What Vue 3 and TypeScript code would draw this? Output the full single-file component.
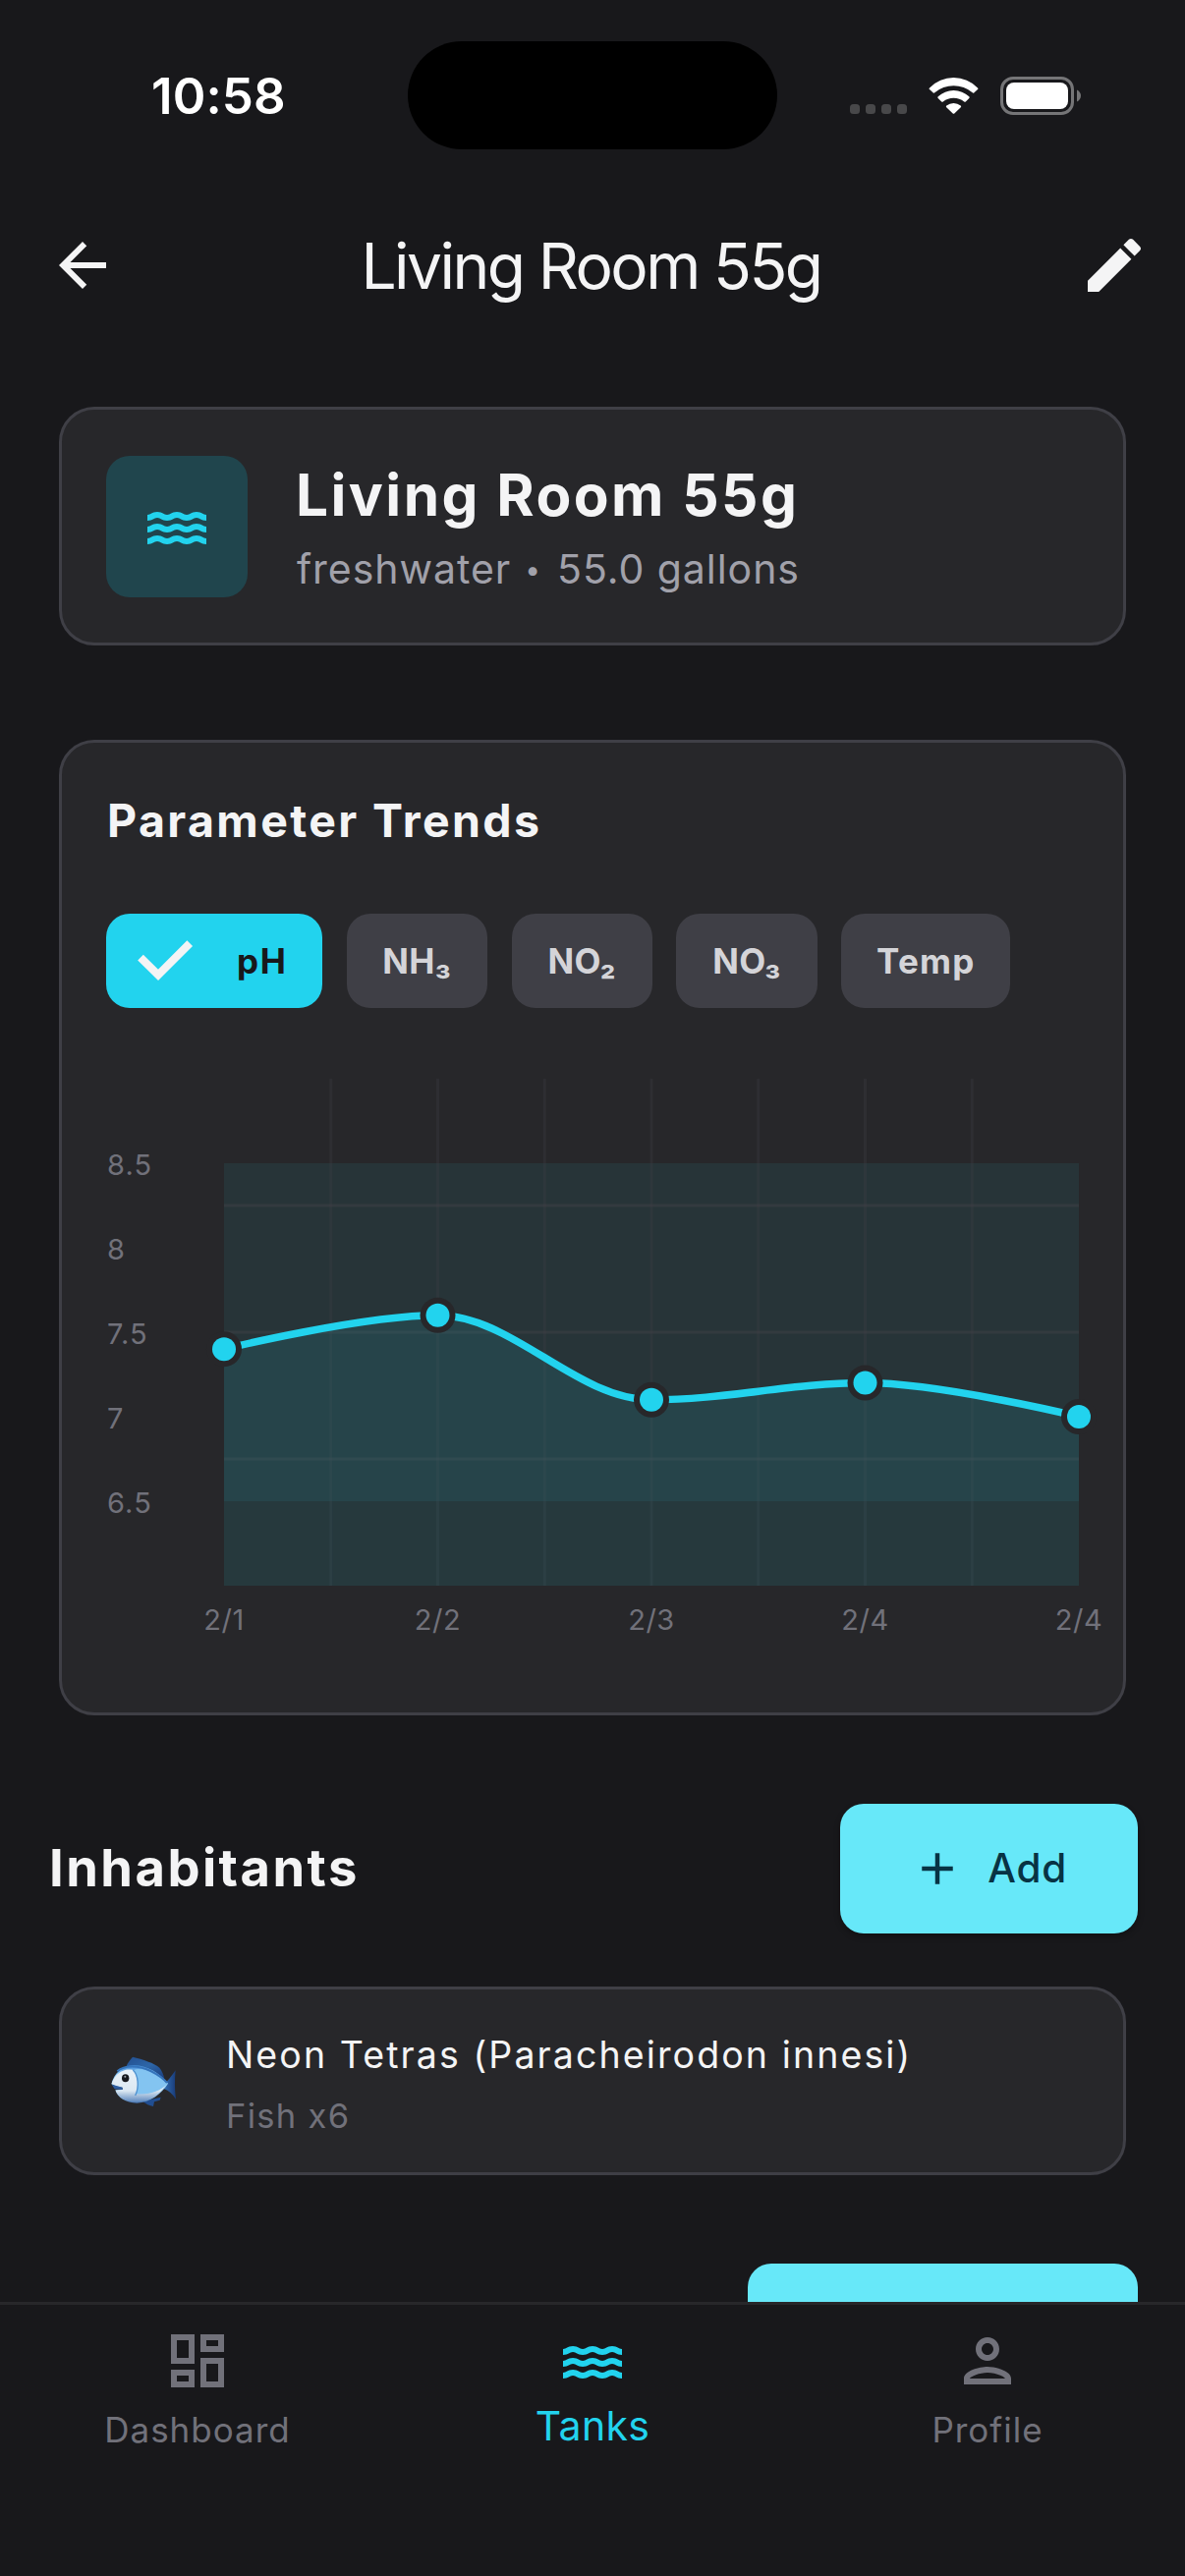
<script setup lang="ts">
interface Reading {
  date: string
  value: number
}

interface Chip {
  label: string
  kind: string
}

const chips: Chip[] = [
  { label: 'pH', kind: 'selected' },
  { label: 'NH₃', kind: 'formula' },
  { label: 'NO₂', kind: 'formula' },
  { label: 'NO₃', kind: 'formula' },
  { label: 'Temp', kind: 'word' },
]

const readings: Reading[] = [
  { date: '2/1', value: 7.4 },
  { date: '2/2', value: 7.6 },
  { date: '2/3', value: 7.1 },
  { date: '2/4', value: 7.2 },
  { date: '2/4', value: 7.0 },
]

// Plot geometry, in the chart's own coordinates
const plot = { left: 120, right: 990, top: 18, bottom: 534 }
const min = 6
const max = 9
const step = (plot.right - plot.left) / (readings.length - 1)
const yOf = (v: number) => plot.bottom - ((v - min) / (max - min)) * (plot.bottom - plot.top)

const points = readings.map((r, i) => ({ x: plot.left + i * step, y: yOf(r.value), date: r.date }))
const tension = step * 0.35

// Smoothed line with flat tangents at the inner points
const linePath = points
  .map((p, i) => {
    if (i === 0) return `M${p.x} ${p.y}`
    const prev = points[i - 1]
    const out = i === 1 ? 0 : tension
    const into = i === points.length - 1 ? 0 : tension
    return `C${prev.x + out} ${prev.y} ${p.x - into} ${p.y} ${p.x} ${p.y}`
  })
  .join(' ')
const areaPath = `${linePath} L${plot.right} ${plot.bottom} L${plot.left} ${plot.bottom} Z`

const verticals = [1, 2, 3, 4, 5, 6, 7].map((k) => plot.left + (k * step) / 2)
const horizontals = [8.25, 7.5, 6.75].map(yOf)
const ticks = [8.5, 8, 7.5, 7, 6.5]

const waveRow =
  'M5.35 9c1.19 0 1.42 1 3.33 1 1.95 0 2.09-1 3.33-1 1.19 0 1.42 1 3.33 1 1.95 0 2.09-1 3.33-1 1.19 0 1.4.98 3.33 1V8c-1.19 0-1.42-1-3.33-1-1.95 0-2.09 1-3.33 1-1.19 0-1.42-1-3.33-1-1.95 0-2.09 1-3.33 1-1.19 0-1.42-1-3.33-1C3.38 7 3.24 8 2 8v2c1.9 0 2.17-1 3.35-1z'
</script>

<template>
  <div class="screen">
    <header class="status">
      <div class="time">10:58</div>
      <div class="island"></div>
      <div class="dots"><i></i><i></i><i></i><i></i></div>
      <svg class="wifi" width="51" height="39" viewBox="0 0 51 39" fill="#fff">
        <path d="M1 11.4A34.2 34.2 0 0 1 50 11.4Q50.9 12.2 50 13L46.2 16.4Q45.5 17 44.7 16.3A29.5 29.5 0 0 0 6.3 16.3Q5.5 17 4.8 16.4L1 13Q.1 12.2 1 11.4Z" />
        <path d="M9.7 20.3A23 23 0 0 1 41.3 20.3Q42.2 21.2 41.3 22L37.8 25.4Q37 26 36.2 25.4A17.4 17.4 0 0 0 14.8 25.4Q14 26 13.2 25.4L9.7 22Q8.8 21.2 9.7 20.3Z" />
        <path d="M18.3 29.6A11.6 11.6 0 0 1 32.7 29.6Q33.7 30.4 32.8 31.2L26.3 37.5Q25.5 38.2 24.7 37.5L18.2 31.2Q17.3 30.4 18.3 29.6Z" />
      </svg>
      <svg class="battery" width="83" height="39" viewBox="0 0 83 39">
        <rect x="1.5" y="1.5" width="72" height="36" rx="11.5" fill="none" stroke="#757577" stroke-width="3" />
        <rect x="6" y="6" width="63" height="27" rx="8" fill="#fff" />
        <path d="M78 13.5c2.4 1 4 3.4 4 6s-1.600 5-4 6z" fill="#757577" />
      </svg>
    </header>

    <div class="appbar">
      <svg class="icon" viewBox="0 0 24 24" fill="#f4f4f5"><path d="M20 11H7.830l5.590-5.590L12 4l-8 8 8 8 1.410-1.410L7.830 13H20v-2z" /></svg>
      <h1>Living Room 55g</h1>
      <svg class="icon" viewBox="0 0 24 24" fill="#f4f4f5"><path d="M3 17.250V21h3.750L17.810 9.940l-3.750-3.750L3 17.250zM20.710 7.040c.39-.39.39-1.020 0-1.410l-2.340-2.340c-.39-.39-1.020-.39-1.410 0l-1.830 1.830 3.750 3.750 1.830-1.830z" /></svg>
    </div>

    <main class="content">
      <section class="card tank">
        <div class="badge">
          <svg class="icon" viewBox="0 0 24 24" fill="#22d3ee">
            <path :d="waveRow" /><path :d="waveRow" transform="translate(0 4)" /><path :d="waveRow" transform="translate(0 8)" />
          </svg>
        </div>
        <div>
          <div class="name">Living Room 55g</div>
          <div class="detail">freshwater <span class="bullet">•</span> 55.0 gallons</div>
        </div>
      </section>

      <section class="card trends">
        <h2>Parameter Trends</h2>
        <div class="chips">
          <div v-for="c in chips" :key="c.label" class="chip" :class="c.kind">
            <svg v-if="c.kind === 'selected'" width="72" height="72" viewBox="0 0 72 72">
              <path d="M11 32.600L29 50.400L61.200 18.200" fill="none" stroke="#f4f4f5" stroke-width="8" />
            </svg>
            <span>{{ c.label }}</span>
          </div>
        </div>
        <svg class="chart" width="990" height="620" viewBox="0 0 990 620">
          <rect :x="plot.left" :y="yOf(8.5)" :width="plot.right - plot.left" :height="yOf(6.5) - yOf(8.5)" fill="#22d3ee" fill-opacity="0.075" />
          <path v-for="x in verticals" :key="x" :d="`M${x} ${plot.top}V${plot.bottom}`" stroke="#3f3f46" stroke-opacity="0.3" stroke-width="3" />
          <path v-for="y in horizontals" :key="y" :d="`M${plot.left} ${y}H${plot.right}`" stroke="#3f3f46" stroke-opacity="0.5" stroke-width="3" />
          <path :d="areaPath" fill="#22d3ee" fill-opacity="0.1" />
          <path :d="linePath" fill="none" stroke="#22d3ee" stroke-width="7.5" />
          <template v-for="(p, i) in points" :key="i">
            <circle :cx="p.x" :cy="p.y" r="18" fill="#27272a" />
            <circle :cx="p.x" :cy="p.y" r="12" fill="#22d3ee" />
            <text :x="p.x" y="578.5" text-anchor="middle" class="date">{{ p.date }}</text>
          </template>
          <text v-for="t in ticks" :key="t" x="1" :y="yOf(t) + 12">{{ t }}</text>
        </svg>
      </section>

      <div class="row">
        <h3>Inhabitants</h3>
        <button class="add">
          <svg width="54" height="54" viewBox="0 0 24 24" fill="#083344"><path d="M19 13h-6v6h-2v-6H5v-2h6V5h2v6h6v2z" /></svg>
          <span>Add</span>
        </button>
      </div>

      <section class="card resident">
        <svg width="92" height="84" viewBox="0 0 276 252">
          <defs>
            <linearGradient id="fish-body" x1="0" y1="0" x2="0" y2="1">
              <stop offset="0" stop-color="#3f86cf" /><stop offset=".2" stop-color="#7dbdf2" />
              <stop offset=".55" stop-color="#9bd3f8" /><stop offset=".85" stop-color="#8fb9e0" /><stop offset="1" stop-color="#3d6ba8" />
            </linearGradient>
            <linearGradient id="fish-belly" x1="0" y1="0" x2="0" y2="1">
              <stop offset="0" stop-color="#e8f1f8" /><stop offset=".65" stop-color="#dce8f2" /><stop offset="1" stop-color="#5b86bd" />
            </linearGradient>
            <linearGradient id="fish-tail" x1="0" y1="0" x2="1" y2="0">
              <stop offset="0" stop-color="#3470b4" /><stop offset="1" stop-color="#183a78" />
            </linearGradient>
            <linearGradient id="fish-fin" x1="0" y1="0" x2="1" y2="1">
              <stop offset="0" stop-color="#234f90" /><stop offset=".5" stop-color="#2d66a8" /><stop offset="1" stop-color="#1b3f7f" />
            </linearGradient>
          </defs>
          <path d="M200 136C214 126 224 110 236 94C233 122 233 152 237 182C228 168 216 156 200 150Z" fill="url(#fish-tail)" />
          <path d="M86 80C91 70 98 60 105 53C135 60 172 72 187 86C194 94 198 105 202 118L140 100Z" fill="url(#fish-fin)" />
          <path d="M134 188C146 196 156 202 168 204L171 190L188 185L191 176Z" fill="#214e91" />
          <path d="M40 136C48 104 72 78 110 78C152 80 186 102 213 134C192 166 160 191 118 194C84 194 58 176 52 154L74 152L74 146L56 143Z" fill="url(#fish-body)" />
          <path d="M41 135C48 112 62 98 84 92C96 90 106 92 109 94C120 110 123 140 116 166C150 168 180 158 205 142C184 170 154 189 118 191C86 191 60 175 53 155L75 153L74 146L56 142Z" fill="url(#fish-belly)" />
          <path d="M108 94C120 86 150 92 170 104C188 114 202 124 211 134C188 160 152 168 117 165C124 140 121 112 108 94Z" fill="#83c4f1" />
          <path d="M106 93C122 108 126 144 113 171" fill="none" stroke="#4f92d0" stroke-width="4" />
          <path d="M41 137L58 142L74 146L74 153L50 151" fill="#2e5da0" />
          <path d="M58 97C80 78 122 78 160 96C180 106 198 118 210 132" fill="none" stroke="#3574bb" stroke-width="6" />
          <ellipse cx="83" cy="118" rx="11" ry="12" fill="#15171c" /><circle cx="82" cy="113" r="3" fill="#9aa3ad" />
        </svg>
        <div>
          <div class="species">Neon Tetras (Paracheirodon innesi)</div>
          <div class="count">Fish x6</div>
        </div>
      </section>

      <div class="row next"><div class="next-button"></div></div>
    </main>

    <nav class="tabs">
      <div class="tab">
        <svg class="icon" viewBox="0 0 24 24" fill="#71717a"><path d="M19 5v2h-4V5h4M9 5v6H5V5h4m10 8v6h-4v-6h4M9 17v2H5v-2h4M21 3h-8v6h8V3zM11 3H3v10h8V3zm10 8h-8v10h8V11zm-10 4H3v6h8v-6z" /></svg>
        <span>Dashboard</span>
      </div>
      <div class="tab active">
        <svg class="icon" viewBox="0 0 24 24" fill="#22d3ee">
          <path :d="waveRow" /><path :d="waveRow" transform="translate(0 4)" /><path :d="waveRow" transform="translate(0 8)" />
        </svg>
        <span>Tanks</span>
      </div>
      <div class="tab">
        <svg class="icon" viewBox="0 0 24 24" fill="#71717a"><path d="M12 6c1.100 0 2 .9 2 2s-.9 2-2 2-2-.9-2-2 .9-2 2-2m0 10c2.700 0 5.800 1.290 6 2H6c.23-.72 3.310-2 6-2m0-12C9.790 4 8 5.790 8 8s1.790 4 4 4 4-1.790 4-4-1.790-4-4-4zm0 10c-2.670 0-8 1.340-8 4v2h16v-2c0-2.660-5.330-4-8-4z" /></svg>
        <span>Profile</span>
      </div>
    </nav>
  </div>
</template>

<style>
body {
  margin: 0;
  background: #18181b;
}
</style>

<style scoped>
.screen {
  width: 1206px;
  height: 2622px;
  display: flex;
  flex-direction: column;
  overflow: hidden;
  background: #18181b;
  color: #f4f4f5;
  font-family: Inter, sans-serif;
  white-space: nowrap;
}
svg {
  display: block;
  flex: none;
}
h1,
h2,
h3 {
  margin: 0;
}
.icon {
  width: 72px;
  height: 72px;
}

.status {
  flex: none;
  display: flex;
  align-items: center;
  height: 110px;
  padding: 42px 0 25px 154px;
}
.time {
  width: 261px;
  margin-top: 2px;
  font-size: 51px;
  line-height: 60px;
  font-weight: 600;
  letter-spacing: 0.1px;
  color: #fff;
}
.island {
  width: 376px;
  height: 110px;
  border-radius: 55px;
  background: #000;
}
.dots {
  display: flex;
  gap: 6px;
  margin: 28px 22px 0 74px;
}
.dots i {
  width: 10px;
  height: 10px;
  border-radius: 3.5px;
  background: #48484a;
}
.wifi {
  margin-right: 22px;
}

.appbar {
  flex: none;
  display: grid;
  grid-template-columns: 72px 1fr 72px;
  align-items: center;
  height: 186px;
  padding: 0 36px 0 48px;
}
h1 {
  padding: 2px 15px 0 0;
  text-align: center;
  font-size: 64px;
  line-height: 84px;
  font-weight: 400;
  letter-spacing: -2.55px;
}

.content {
  flex: 1;
  min-height: 0;
  overflow: hidden;
  padding-top: 51px;
}
.card {
  box-sizing: border-box;
  width: 1086px;
  margin-left: 60px;
  border: 3px solid #3f3f46;
  border-radius: 36px;
  background: #27272a;
}
.tank {
  display: flex;
  align-items: center;
  gap: 49px;
  height: 243px;
  padding-left: 45px;
}
.badge {
  display: flex;
  align-items: center;
  justify-content: center;
  width: 144px;
  height: 144px;
  border-radius: 24px;
  background: #20454d;
}
.name {
  font-size: 58.5px;
  line-height: 86px;
  font-weight: 700;
  letter-spacing: 2.45px;
}
.detail {
  padding: 2px 0 2px 1px;
  font-size: 41px;
  line-height: 60px;
  letter-spacing: 0.95px;
  color: #a1a1aa;
}
.bullet {
  display: inline-block;
  width: 20px;
  margin-right: 2px;
  font-size: 28px;
  line-height: 40px;
  text-align: center;
  vertical-align: 4px;
}

.trends {
  height: 993px;
  margin-top: 96px;
  padding: 49px 45px 0;
}
h2 {
  font-size: 46.5px;
  line-height: 60px;
  font-weight: 700;
  letter-spacing: 2.38px;
  padding-left: 1px;
}
.chips {
  display: flex;
  gap: 24.7px;
  margin-top: 65px;
}
.chip {
  display: flex;
  align-items: center;
  justify-content: center;
  width: 143.2px;
  height: 96px;
  border-radius: 24px;
  background: #3f3f46;
  color: #d4d4d8;
  font-size: 35px;
  line-height: 60px;
  font-weight: 650;
  letter-spacing: 0.3px;
}
.chip.selected {
  box-sizing: border-box;
  justify-content: flex-start;
  gap: 37px;
  width: 220px;
  padding-left: 24px;
  background: #22d3ee;
  color: #18181b;
  letter-spacing: 1.6px;
}
.chip.word {
  width: 172px;
  letter-spacing: 1.3px;
}
.chart {
  margin-top: 54px;
  overflow: visible;
}
.chart text {
  font-family: Inter, sans-serif;
  font-size: 29px;
  letter-spacing: 1.1px;
  fill: #71717a;
}
.chart .date {
  letter-spacing: 0.5px;
}

.row {
  display: flex;
  align-items: center;
  justify-content: space-between;
  margin-top: 90px;
  padding: 0 48px 0 50px;
}
h3 {
  padding-bottom: 2px;
  font-size: 52.5px;
  line-height: 72px;
  font-weight: 700;
  letter-spacing: 2.45px;
}
.add {
  box-sizing: border-box;
  display: flex;
  align-items: center;
  gap: 24.8px;
  width: 303.5px;
  height: 132px;
  padding: 0 0 0 72px;
  border: 0;
  border-radius: 24px;
  background: #67e8f9;
  box-shadow: 0 3px 6px rgba(0, 0, 0, 0.3);
  color: #083344;
  font: 500 40.5px/60px Inter, sans-serif;
  letter-spacing: 0.73px;
}
.resident {
  display: flex;
  align-items: center;
  gap: 38px;
  height: 192px;
  margin-top: 54px;
  padding-left: 37px;
}
.species,
.count {
  line-height: 62px;
}
.species {
  padding-top: 9px;
  font-size: 37.5px;
  letter-spacing: 2.11px;
}
.count {
  font-size: 34.5px;
  letter-spacing: 1.3px;
  color: #71717a;
}
.next {
  justify-content: flex-end;
}
.next-button {
  width: 397px;
  height: 132px;
  border-radius: 24px;
  background: #67e8f9;
}

.tabs {
  box-sizing: border-box;
  flex: none;
  display: flex;
  height: 279px;
  padding-top: 21px;
  border-top: 3px solid #27272a;
}
.tab {
  flex: 1;
  display: flex;
  flex-direction: column;
  align-items: center;
  color: #71717a;
}
.tab span {
  margin-top: 10px;
  font-size: 35px;
  line-height: 48px;
  letter-spacing: 1px;
}
.tab.active span {
  margin-top: 6px;
  font-size: 41px;
  letter-spacing: 0.3px;
  color: #22d3ee;
}
</style>
